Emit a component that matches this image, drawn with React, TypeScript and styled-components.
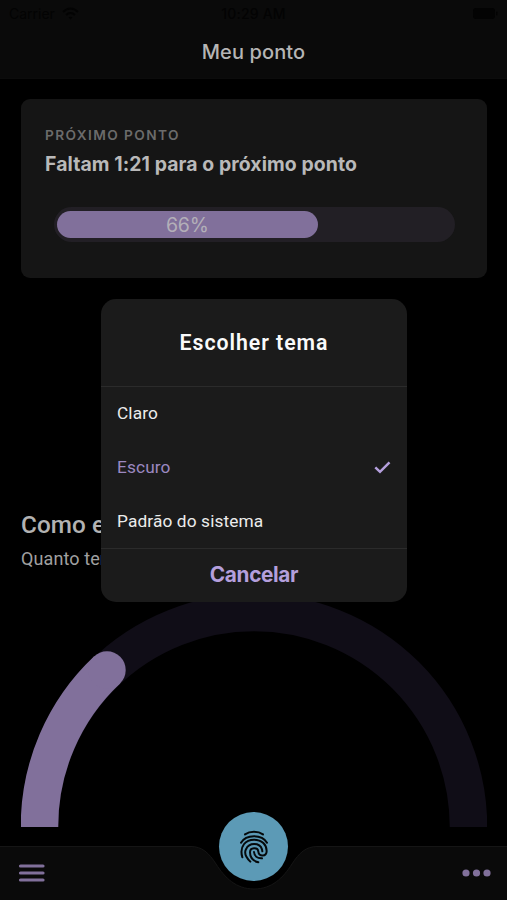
import React from 'react';
import styled, { createGlobalStyle } from 'styled-components';

const SANS = 'Inter, "Liberation Sans", sans-serif';
const ROBOTO = 'Roboto, "Liberation Sans", sans-serif';

const GlobalStyle = createGlobalStyle`
  html, body { margin: 0; background: #000; }
  * { box-sizing: border-box; }
  button { border: 0; padding: 0; background: none; font: inherit; color: inherit; }
`;

const Screen = styled.div`
  position: relative;
  width: 507px;
  height: 900px;
  overflow: hidden;
  display: flex;
  flex-direction: column;
  background: #000;
  font-family: ${SANS};
`;

const Header = styled.header`
  flex: none;
  height: 79px;
  background: #0a0a0a;
  border-bottom: 1px solid #0c0c0c;
`;

const StatusBar = styled.div`
  height: 27px;
  padding: 0 9px 0 9px;
  display: grid;
  grid-template-columns: 1fr auto 1fr;
  align-items: center;
  color: #030303;
  font-size: 14px;
`;

const Carrier = styled.div`
  display: flex;
  align-items: center;
  gap: 7px;
`;

const Clock = styled.span`
  font-weight: 500;
  letter-spacing: 0.2px;
`;

const Battery = styled.svg`
  justify-self: end;
`;

const HeaderTitle = styled.h1`
  margin: 0;
  height: 50px;
  line-height: 51px;
  text-align: center;
  color: #b5b5b5;
  font-size: 20px;
  font-weight: 500;
  letter-spacing: 0.12px;
`;

const Content = styled.main`
  flex: 1;
  min-height: 0;
  padding: 20px 20px 0 21px;
  display: flex;
  flex-direction: column;
`;

const Card = styled.section`
  flex: none;
  height: 179px;
  padding: 27px 32px 0 24px;
  border-radius: 9px;
  background: #151515;
`;

const CardLabel = styled.div`
  height: 20px;
  line-height: 19px;
  color: #6b6b6b;
  font-size: 13.7px;
  font-weight: 600;
  letter-spacing: 1.4px;
`;

const CardTitle = styled.div`
  height: 36px;
  line-height: 37px;
  color: #b9b9b9;
  font-size: 19.4px;
  font-weight: 650;
  letter-spacing: 0.09px;
  white-space: nowrap;
`;

const Track = styled.div`
  height: 35px;
  margin: 25px 0 0 9px;
  padding: 4px 3px;
  border-radius: 18px;
  background: #221f25;
`;

const Fill = styled.div<{ $percent: number }>`
  width: ${({ $percent }) => $percent}%;
  height: 27px;
  border-radius: 14px;
  background: #81709b;
  color: #b3afb8;
  font-size: 19.5px;
  line-height: 28px;
  letter-spacing: -0.2px;
  text-align: center;
`;

const Section = styled.section`
  margin-top: 229px;
`;

const SectionTitle = styled.h2`
  margin: 0;
  height: 36px;
  line-height: 36px;
  color: #b2b2b2;
  font-family: ${ROBOTO};
  font-size: 24.3px;
  font-weight: 500;
  letter-spacing: 0.05px;
`;

const SectionText = styled.p`
  margin: 0;
  height: 34px;
  line-height: 32px;
  color: #a0a0a0;
  font-family: ${ROBOTO};
  font-size: 18px;
  letter-spacing: 0.1px;
`;

const Gauge = styled.svg`
  display: block;
  margin-top: 16px;
`;

const BottomBar = styled.nav`
  position: absolute;
  inset: auto 0 0 0;
  height: 54px;
`;

const BarShape = styled.svg`
  position: absolute;
  inset: 0;
`;

const BarItems = styled.div`
  position: relative;
  height: 54px;
  padding: 0 16px 0 18px;
  display: flex;
  align-items: center;
  justify-content: space-between;
  color: #81709b;

  svg { display: block; }
`;

const PunchButton = styled.button`
  position: absolute;
  left: 219px;
  bottom: 19px;
  width: 69px;
  height: 69px;
  display: flex;
  align-items: center;
  justify-content: center;
  border-radius: 50%;
  background: #5c9ab6;
  color: #05090b;
`;

const Dialog = styled.div`
  position: absolute;
  left: 101px;
  top: 299px;
  width: 306px;
  height: 302.5px;
  overflow: hidden;
  display: flex;
  flex-direction: column;
  border-radius: 15px;
  background: #1b1b1b;
`;

const DialogTitle = styled.h2`
  margin: 0;
  height: 88px;
  line-height: 87px;
  border-bottom: 1px solid #2b2b2b;
  text-align: center;
  color: #fafafa;
  font-family: ${ROBOTO};
  font-size: 21.3px;
  font-weight: 600;
  letter-spacing: 0.95px;
`;

const Options = styled.div`
  height: 161px;
  display: flex;
  flex-direction: column;
`;

const Option = styled.button<{ $selected?: boolean }>`
  flex: none;
  height: 53.7px;
  padding: 0 16px 1px;
  display: flex;
  align-items: center;
  justify-content: space-between;
  color: ${({ $selected }) => ($selected ? '#9b88c0' : '#ececec')};
  font-family: ${ROBOTO};
  font-size: 17.3px;
  letter-spacing: 0.12px;
`;

const CancelButton = styled.button`
  flex: 1;
  padding-bottom: 1px;
  border-top: 1px solid #2b2b2b;
  color: #b49fdc;
  font-size: 20.8px;
  font-weight: 650;
  letter-spacing: -0.35px;
`;

const options = ['Claro', 'Escuro', 'Padrão do sistema'];

export default function App() {
  const selected = 'Escuro';
  return (
    <>
      <GlobalStyle />
      <Screen>
        <Header>
          <StatusBar>
            <Carrier>
              <span>Carrier</span>
              <svg width="17" height="13" viewBox="0 0 17 13" fill="none" stroke="currentColor" strokeWidth="2">
                <path d="M1 5Q8.500-2 16 5M4 8Q8.500 4 13 8" />
                <path d="M6.500 10.500 8.500 12.500 10.500 10.500Q8.500 9 6.500 10.500Z" fill="currentColor" stroke="none" />
              </svg>
            </Carrier>
            <Clock>10:29 AM</Clock>
            <Battery width="25" height="12" viewBox="0 0 25 12" fill="currentColor">
              <rect width="22" height="11" rx="3" />
              <rect x="23" y="3.500" width="1.500" height="4" rx="0.700" />
            </Battery>
          </StatusBar>
          <HeaderTitle>Meu ponto</HeaderTitle>
        </Header>

        <Content>
          <Card>
            <CardLabel>PRÓXIMO PONTO</CardLabel>
            <CardTitle>Faltam 1:21 para o próximo ponto</CardTitle>
            <Track>
              <Fill $percent={66}>66%</Fill>
            </Track>
          </Card>

          <Section>
            <SectionTitle>Como estou hoje</SectionTitle>
            <SectionText>Quanto tempo já trabalhei</SectionText>
            <Gauge width="466" height="234" viewBox="0 0 466 234" fill="none" strokeWidth="37.500">
              <path d="M18.500 234A214.500 214.500 0 0 1 447.500 234" stroke="#100d17" />
              <path d="M18.500 234A214.500 214.500 0 0 1 86 77" stroke="#81709b" />
              <circle cx="86" cy="77" r="18.700" fill="#81709b" stroke="none" />
            </Gauge>
          </Section>
        </Content>

        <BottomBar>
          <BarShape width="507" height="54" viewBox="0 0 507 54">
            <path
              d="M-1 .5H191C202 .5 209 7 216 18C225 32 236 43 254 43C272 43 283 32 292 18C299 7 306 .5 317 .5H508V51H-1Z"
              fill="#0a0a0a"
              stroke="#151515"
            />
            <path d="M0 49H507V54H0Z" fill="#0a0a0a" />
          </BarShape>
          <BarItems>
            <svg width="27" height="20" viewBox="0 0 27 20" stroke="currentColor" strokeWidth="3.200" strokeLinecap="round">
              <path d="M2.500 3H25M2.500 10H25M2.500 17H25" />
            </svg>
            <svg width="29" height="8" viewBox="0 0 29 8" fill="currentColor">
              <circle cx="4" cy="4" r="3.600" />
              <circle cx="14.500" cy="4" r="3.600" />
              <circle cx="25" cy="4" r="3.600" />
            </svg>
          </BarItems>
          <PunchButton aria-label="Registrar ponto">
            <svg width="40" height="40" viewBox="0 0 120 120" fill="none" stroke="currentColor" strokeWidth="6" strokeLinecap="round">
              <path d="M33 22C48 12 72 12 87 22" />
              <path d="M21 47C36 21 84 21 99 47" />
              <path d="M25 91C15 57 36 38 60 38C84 38 98 54 98 72C98 90 74 90 73 74C72 60 48 60 48 76C48 92 58 102 73 106" />
              <path d="M49 104C35 90 31 76 36 67C45 46 77 46 84 67L85 73" />
              <path d="M60 75C61 87 70 95 84 94" />
            </svg>
          </PunchButton>
        </BottomBar>

        <Dialog role="dialog">
          <DialogTitle>Escolher tema</DialogTitle>
          <Options>
            {options.map((name) => (
              <Option key={name} $selected={name === selected}>
                <span>{name}</span>
                {name === selected && (
                  <svg width="17" height="13" viewBox="0 0 17 13" fill="none" stroke="#b49fdc" strokeWidth="2.500">
                    <path d="M1.300 6.300 6 10.800 15.500 1.300" />
                  </svg>
                )}
              </Option>
            ))}
          </Options>
          <CancelButton>Cancelar</CancelButton>
        </Dialog>
      </Screen>
    </>
  );
}
